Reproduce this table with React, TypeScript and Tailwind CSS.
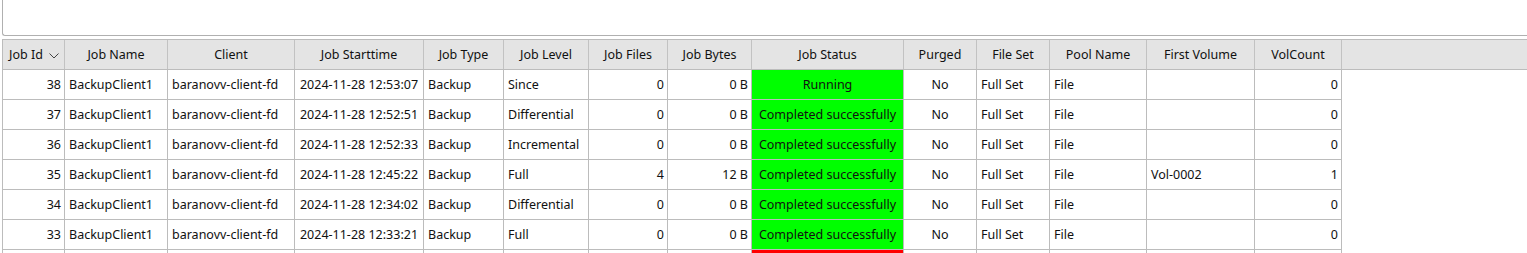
import React from "react";

type Align = "l" | "r" | "c";
const cols: { title: string; w: string; a: Align }[] = [
  { title: "Job Id", w: "w-[62px]", a: "r" },
  { title: "Job Name", w: "w-[103px]", a: "l" },
  { title: "Client", w: "w-[127px]", a: "l" },
  { title: "Job Starttime", w: "w-[129px]", a: "c" },
  { title: "Job Type", w: "w-[80px]", a: "l" },
  { title: "Job Level", w: "w-[85px]", a: "l" },
  { title: "Job Files", w: "w-[79px]", a: "r" },
  { title: "Job Bytes", w: "w-[84px]", a: "r" },
  { title: "Job Status", w: "w-[152px]", a: "c" },
  { title: "Purged", w: "w-[73px]", a: "c" },
  { title: "File Set", w: "w-[73px]", a: "l" },
  { title: "Pool Name", w: "w-[97px]", a: "l" },
  { title: "First Volume", w: "w-[108px]", a: "l" },
  { title: "VolCount", w: "w-[87px]", a: "r" },
];

const rows: string[][] = [
  ["38", "BackupClient1", "baranovv-client-fd", "2024-11-28 12:53:07", "Backup", "Since", "0", "0 B", "Running", "No", "Full Set", "File", "", "0"],
  ["37", "BackupClient1", "baranovv-client-fd", "2024-11-28 12:52:51", "Backup", "Differential", "0", "0 B", "Completed successfully", "No", "Full Set", "File", "", "0"],
  ["36", "BackupClient1", "baranovv-client-fd", "2024-11-28 12:52:33", "Backup", "Incremental", "0", "0 B", "Completed successfully", "No", "Full Set", "File", "", "0"],
  ["35", "BackupClient1", "baranovv-client-fd", "2024-11-28 12:45:22", "Backup", "Full", "4", "12 B", "Completed successfully", "No", "Full Set", "File", "Vol-0002", "1"],
  ["34", "BackupClient1", "baranovv-client-fd", "2024-11-28 12:34:02", "Backup", "Differential", "0", "0 B", "Completed successfully", "No", "Full Set", "File", "", "0"],
  ["33", "BackupClient1", "baranovv-client-fd", "2024-11-28 12:33:21", "Backup", "Full", "0", "0 B", "Completed successfully", "No", "Full Set", "File", "", "0"],
];

const alignCls: Record<Align, string> = {
  l: "justify-start pl-[4px] pr-[3px]",
  r: "justify-end pl-[4px] pr-[3px]",
  c: "justify-center px-[3px]",
};

export default function App() {
  return (
    <div
      className="w-[1527px] h-[253px] overflow-hidden bg-white text-[12.5px] text-[#111] leading-none"
      style={{ fontFamily: '"Noto Sans", "Open Sans", sans-serif' }}
    >
      {/* top frame */}
      <div className="ml-[2px] h-[36px] border-l border-b border-[#b0b0b0] rounded-bl-[3px] bg-white" />
      {/* table */}
      <div className="mt-[3px] ml-[2px] border-l border-[#bcbcbc]">
        {/* header */}
        <div className="flex h-[31px] border-t border-b border-[#bcbcbc] bg-[#e4e4e4]">
          {cols.map((c, i) => (
            <div
              key={c.title}
              className={`${c.w} shrink-0 h-full border-r border-[#c2c2c2] flex items-center pt-[1px] ${i === 0 ? "justify-between pl-[6px] pr-[5px]" : "justify-center"}`}
            >
              <span>{c.title}</span>
              {i === 0 && (
                <svg width="10" height="6" viewBox="0 0 10 6" className="mt-[1px]">
                  <polyline points="0.5,0.5 5,5 9.5,0.5" fill="none" stroke="#444" strokeWidth="1" />
                </svg>
              )}
            </div>
          ))}
        </div>
        {/* body */}
        {rows.map((r, ri) => (
          <div key={ri} className="flex h-[30px]">
            {cols.map((c, ci) => {
              const bg = ci === 8 ? "bg-[#00ff00]" : "bg-white";
              return (
                <div
                  key={ci}
                  className={`${c.w} shrink-0 h-full border-r border-b border-[#bcbcbc] flex items-center pt-[1px] whitespace-nowrap overflow-hidden ${alignCls[c.a]} ${bg}`}
                >
                  {r[ci]}
                </div>
              );
            })}
          </div>
        ))}
        {/* partially visible next row */}
        <div className="flex h-[30px]">
          {cols.map((c, ci) => (
            <div
              key={ci}
              className={`${c.w} shrink-0 h-full border-r border-b border-[#bcbcbc] ${ci === 8 ? "bg-[#ff0000]" : "bg-white"}`}
            />
          ))}
        </div>
      </div>
    </div>
  );
}
